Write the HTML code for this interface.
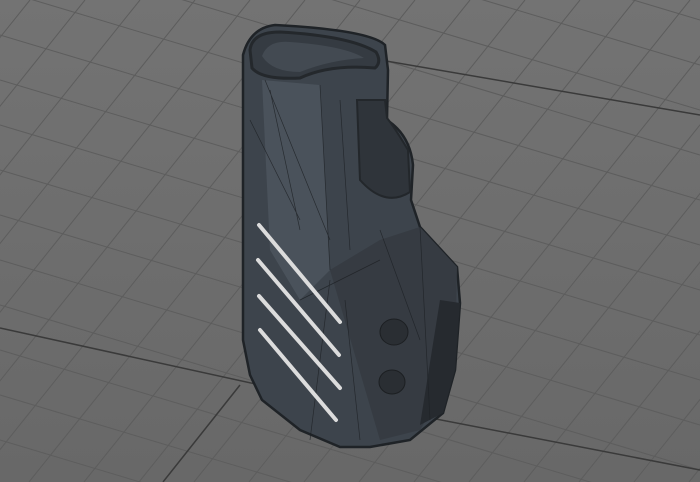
<!DOCTYPE html>
<html><head><style>html,body{margin:0;padding:0;width:700px;height:482px;overflow:hidden;background:#6d6d6d}svg{display:block}</style></head>
<body>
<svg width="700" height="482" viewBox="0 0 700 482" xmlns="http://www.w3.org/2000/svg">
<defs><linearGradient id="bg" x1="0" y1="0" x2="0" y2="1"><stop offset="0" stop-color="#737373"/><stop offset="1" stop-color="#686868"/></linearGradient></defs>
<rect width="700" height="482" fill="url(#bg)"/>
<g stroke="#5d5d5d" stroke-width="1" fill="none">
<path d="M0,-190 L700,20 M0,-145 L700,65 M0,-100 L700,110 M0,-55 L700,155 M0,-10 L700,200 M0,35 L700,245 M0,80 L700,290 M0,125 L700,335 M0,170 L700,380 M0,215 L700,425 M0,260 L700,470 M0,305 L700,515 M0,350 L700,560 M0,395 L700,605 M0,440 L700,650"/>
<path d="M30,0 L-356,482 M85,0 L-301,482 M140,0 L-246,482 M195,0 L-191,482 M250,0 L-136,482 M305,0 L-81,482 M360,0 L-26,482 M415,0 L29,482 M470,0 L84,482 M525,0 L139,482 M580,0 L194,482 M635,0 L249,482 M690,0 L304,482 M745,0 L359,482 M800,0 L414,482 M855,0 L469,482 M910,0 L524,482 M965,0 L579,482 M1020,0 L634,482 M1075,0 L689,482 M1130,0 L744,482"/>
</g>
<path d="M0,328 L260,385 L700,470" stroke="#3a3a3a" stroke-width="1.5" fill="none"/>
<path d="M380,60 L700,115" stroke="#3a3a3a" stroke-width="1.5" fill="none"/>
<path d="M240,385 L163,482" stroke="#3a3a3a" stroke-width="1.5" fill="none"/>
<path d="M243,55 Q250,28 275,25 Q370,30 385,45 L388,70 L387,120 Q410,135 413,165 L411,200 L420,227 L457,267 L460,303 L455,370 L443,413 L410,440 L370,447 L340,447 L300,430 L262,400 L250,375 L243,340 Z" fill="#3d444c" stroke="#1f2327" stroke-width="2.5"/>
<path d="M262,80 L320,85 L330,270 L300,300 L270,250 Z" fill="#4a525b"/>
<path d="M330,270 L380,240 L420,227 L457,267 L455,370 L420,430 L380,440 Z" fill="#363b42"/>
<path d="M440,300 L460,303 L455,370 L443,413 L420,425 Z" fill="#262a2f"/>
<path d="M357,100 L360,180 Q385,208 410,192 L408,150 Q395,128 387,118 L385,100 Z" fill="#2f343a" stroke="#23272b" stroke-width="2"/>
<path d="M250,50 Q252,32 280,32 Q350,36 376,52 Q382,62 375,68 Q330,64 300,78 Q262,80 252,68 Z" fill="#353b42" stroke="#24282c" stroke-width="3"/>
<path d="M262,56 Q268,40 290,42 Q345,46 364,58 Q330,60 300,72 Q272,72 262,56 Z" fill="#434a52"/>
<ellipse cx="394" cy="332" rx="14" ry="13" fill="#2a2e33" stroke="#1c1f22"/>
<ellipse cx="392" cy="382" rx="13" ry="12" fill="#2a2e33" stroke="#1c1f22"/>
<g stroke="#1e2226" stroke-width="0.7" fill="none" opacity="0.8">
<path d="M265,80 L330,240 M270,90 L300,230 M250,120 L300,220 M320,85 L330,270 M340,100 L350,250 M380,230 L420,340 M300,300 L380,260 M310,440 L330,280 M345,300 L360,440 M420,227 L430,420"/>
</g>
<g stroke="#dcdcdc" stroke-width="4" stroke-linecap="round">
<path d="M259,225 L340,322 M258,260 L339,355 M259,296 L340,388 M260,330 L336,420"/>
</g>
</svg>
</body></html>
